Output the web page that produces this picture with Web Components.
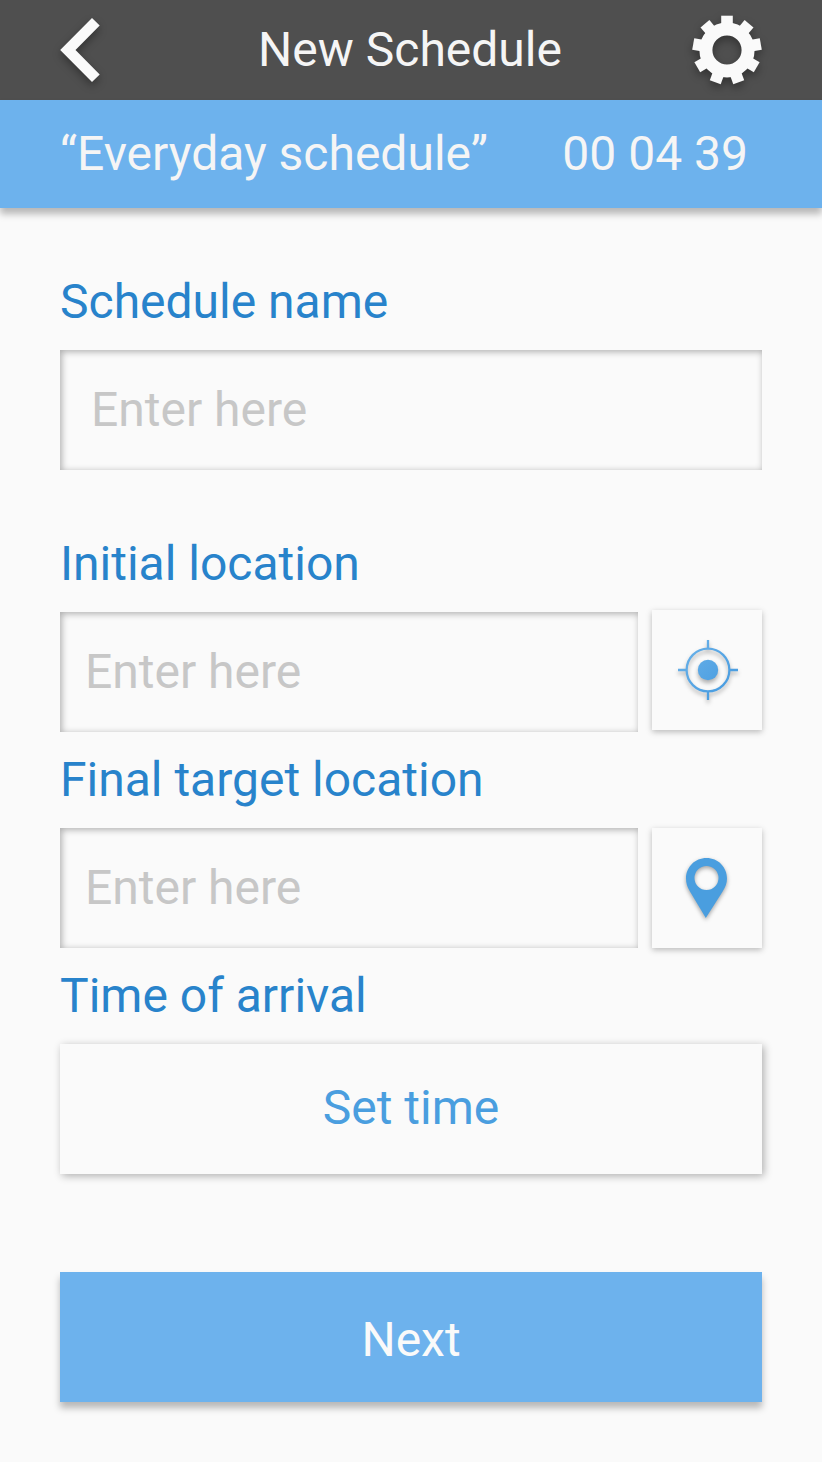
<!DOCTYPE html>
<html lang="en">
<head>
<meta charset="utf-8">
<title>New Schedule</title>
<style>
html, body { margin: 0; background: #fafafa; }
body { font: 400 48px/56px Roboto, sans-serif; color: #f5f5f5; }
</style>
</head>
<body>
<schedule-page></schedule-page>
<script>
class Base extends HTMLElement {
  constructor() {
    super();
    this.attachShadow({ mode: 'open' }).innerHTML = this.render();
  }
}

customElements.define('back-icon', class extends Base {
  render() {
    return `<style>:host{display:block;width:40px;height:100px}svg{display:block;overflow:visible;filter:drop-shadow(0 4px 4px rgba(0,0,0,.35))}</style>
    <svg width="40" height="100"><path fill="#fafafa" d="M.2 50 32 18 39.7 25.5 15.5 50 39.7 74.5 32 82Z"/></svg>`;
  }
});

customElements.define('gear-icon', class extends Base {
  render() {
    const teeth = Array.from({ length: 9 }, (_, i) =>
      `<path transform="rotate(${i * 40})" d="M-5.8-34.3H5.8V-24H-5.8Z"/>`).join('');
    return `<style>:host{display:block;width:70px;height:100px}svg{display:block;overflow:visible;filter:drop-shadow(0 4px 4px rgba(0,0,0,.35))}</style>
    <svg width="70" height="100"><g fill="#fafafa" transform="translate(35 50)">${teeth}<circle r="21.1" fill="none" stroke="#fafafa" stroke-width="13"/></g></svg>`;
  }
});

customElements.define('target-icon', class extends Base {
  render() {
    return `<style>:host{display:block;width:60px;height:60px}svg{display:block;overflow:visible;filter:drop-shadow(0 3px 2px rgba(0,0,0,.3))}</style>
    <svg width="60" height="60" viewBox="0 0 60 60"><defs><linearGradient id="g" gradientUnits="userSpaceOnUse" x1="8" y1="8" x2="52" y2="52"><stop stop-color="#68b0e8"/><stop offset="1" stop-color="#469be0"/></linearGradient></defs>
    <g fill="none" stroke="url(#g)" stroke-width="2.3"><circle cx="30" cy="30" r="21.4"/><path d="M30.01 0 30 9M30 51 30.01 60M0 30.01 9 30M51 30 60 30.01"/></g><circle cx="30" cy="30" r="10.2" fill="url(#g)"/></svg>`;
  }
});

customElements.define('pin-icon', class extends Base {
  render() {
    return `<style>:host{display:block;width:42px;height:60px}svg{display:block;overflow:visible;filter:drop-shadow(0 2px 2px rgba(0,0,0,.35))}</style>
    <svg width="42" height="60" viewBox="0 0 42 60"><path fill="#4a9edf" fill-rule="evenodd" d="M20.5 0C32 0 41 9 41 20.5C41 25 39.5 29 36.8 33.3L19.8 60 3.8 33.3C1.2 29 0 25 0 20.5C0 9 9 0 20.5 0ZM20.5 8A12 12 0 1 0 20.5 32A12 12 0 1 0 20.5 8Z"/></svg>`;
  }
});

customElements.define('app-bar', class extends Base {
  render() {
    return `<style>:host{display:grid;grid-template-columns:70px 1fr 70px;align-items:center;height:100px;padding:0 60px;background:#4f4f4f}
    .title{padding-right:2px;text-align:center;white-space:nowrap}</style>
    <slot name="start"></slot><span class="title"><slot></slot></span><slot name="end"></slot>`;
  }
});

customElements.define('status-bar', class extends Base {
  render() {
    return `<style>:host{display:flex;justify-content:space-between;align-items:center;height:108px;padding:0 74px 0 60px;background:#6db2ed;box-shadow:0 6px 7px rgba(0,0,0,.27);white-space:nowrap}</style>
    <slot></slot><slot name="time"></slot>`;
  }
});

customElements.define('field-label', class extends Base {
  render() {
    return `<style>:host{display:block;height:56px;margin-bottom:20px;color:#2883cb;white-space:nowrap}</style><slot></slot>`;
  }
});

customElements.define('text-field', class extends Base {
  render() {
    return `<style>:host{display:flex;align-items:center;flex:1;box-sizing:border-box;height:120px;padding-left:var(--inset,25px);color:#c7c7c7;background:#fafafa;box-shadow:inset 1.5px 1.5px 7px rgba(0,0,0,.32)}</style><slot></slot>`;
  }
});

customElements.define('field-row', class extends Base {
  render() {
    return `<style>:host{display:flex;gap:14px;height:120px}</style><slot></slot>`;
  }
});

customElements.define('icon-button', class extends Base {
  render() {
    return `<style>:host{display:flex;align-items:center;justify-content:center;width:110px;height:120px;background:#fafafa;box-shadow:0 2px 6px rgba(0,0,0,.26)}</style><slot></slot>`;
  }
});

customElements.define('action-button', class extends Base {
  render() {
    return `<style>:host{display:flex;align-items:center;justify-content:center;box-sizing:border-box;height:130px;padding-bottom:2px;color:#4a9edf;background:#fafafa;box-shadow:2px 2px 8px rgba(0,0,0,.3)}
    :host([primary]){padding:5px 0 0;color:#fafafa;background:#6db2ed;box-shadow:0 6px 7px rgba(0,0,0,.27)}</style><slot></slot>`;
  }
});

customElements.define('schedule-page', class extends Base {
  render() {
    return `<style>
    :host{display:block;width:822px;height:1462px;overflow:hidden;background:#fafafa}
    main{display:flex;flex-direction:column;padding:66px 60px 0}
    .name{flex:none;--inset:31px;margin-bottom:66px}
    field-row{margin-bottom:20px}
    .locate{margin-top:-2px}
    .target{margin-left:2px}
    .next{margin-top:98px}
    .pin{margin-left:-1px}
    </style>
    <app-bar><back-icon slot="start"></back-icon>New Schedule<gear-icon slot="end"></gear-icon></app-bar>
    <status-bar>“Everyday schedule”<span slot="time">00 04 39</span></status-bar>
    <main>
      <field-label>Schedule name</field-label>
      <text-field class="name">Enter here</text-field>
      <field-label>Initial location</field-label>
      <field-row><text-field>Enter here</text-field><icon-button class="locate"><target-icon class="target"></target-icon></icon-button></field-row>
      <field-label>Final target location</field-label>
      <field-row><text-field>Enter here</text-field><icon-button><pin-icon class="pin"></pin-icon></icon-button></field-row>
      <field-label>Time of arrival</field-label>
      <action-button>Set time</action-button>
      <action-button class="next" primary>Next</action-button>
    </main>`;
  }
});
</script>
</body>
</html>
